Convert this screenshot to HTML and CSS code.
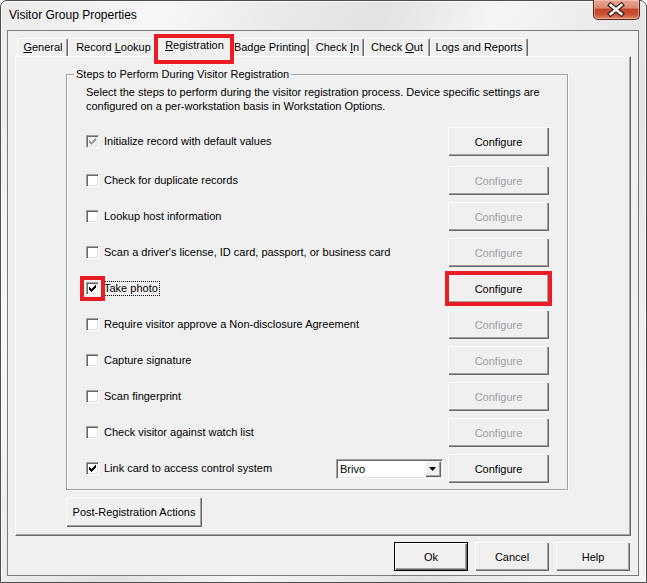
FILE: index.html
```html
<!DOCTYPE html>
<html>
<head>
<meta charset="utf-8">
<title>Visitor Group Properties</title>
<link rel="stylesheet" href="styles.css">
</head>
<body>
<div class="window">
  <div class="titlebar">
    <span class="title">Visitor Group Properties</span>
    <div class="close">
      <svg width="47" height="19" viewBox="0 0 47 19">
        <path d="M18 5 L29 14 M29 5 L18 14" stroke="#3b1a12" stroke-width="5" stroke-linecap="square" fill="none"/>
        <path d="M18 5 L29 14 M29 5 L18 14" stroke="#ffffff" stroke-width="2.6" stroke-linecap="square" fill="none"/>
      </svg>
    </div>
  </div>
  <div class="client">
    <div class="tabs">
      <div class="tab t1"><u>G</u>eneral</div>
      <div class="tab t2">Record <u>L</u>ookup</div>
      <div class="tab t3 sel"><u>R</u>egistration</div>
      <div class="tab t4">Badge Printing</div>
      <div class="tab t5">Check <u>I</u>n</div>
      <div class="tab t6">Check <u>O</u>ut</div>
      <div class="tab t7">Lo<u>g</u>s and Reports</div>
    </div>
    <div class="panel">
      <div class="group">
        <span class="legend">Steps to Perform During Visitor Registration</span>
        <p class="desc">Select the steps to perform during the visitor registration process. Device specific settings are<br>configured on a per-workstation basis in Workstation Options.</p>
        <div class="rows">
          <div class="row first">
            <div class="chk"><span class="box dis"><svg viewBox="0 0 13 13" width="13" height="13"><path d="M3 5V8H4V9H5V10H6V9H7V8H8V7H9V6H10V3H9V4H8V5H7V6H6V7H5V6H4V5Z"/></svg></span><span class="lbl">Initialize record with default values</span></div>
            <button class="btn cfg">Configure</button>
          </div>
          <div class="row">
            <div class="chk"><span class="box"></span><span class="lbl">Check for duplicate records</span></div>
            <button class="btn cfg" disabled>Configure</button>
          </div>
          <div class="row">
            <div class="chk"><span class="box"></span><span class="lbl">Lookup host information</span></div>
            <button class="btn cfg" disabled>Configure</button>
          </div>
          <div class="row">
            <div class="chk"><span class="box"></span><span class="lbl">Scan a driver's license, ID card, passport, or business card</span></div>
            <button class="btn cfg" disabled>Configure</button>
          </div>
          <div class="row">
            <div class="chk"><span class="box mark"><svg viewBox="0 0 13 13" width="13" height="13"><path d="M3 5V8H4V9H5V10H6V9H7V8H8V7H9V6H10V3H9V4H8V5H7V6H6V7H5V6H4V5Z"/></svg></span><span class="lbl focus">Take photo</span></div>
            <button class="btn cfg mark">Configure</button>
          </div>
          <div class="row">
            <div class="chk"><span class="box"></span><span class="lbl">Require visitor approve a Non-disclosure Agreement</span></div>
            <button class="btn cfg" disabled>Configure</button>
          </div>
          <div class="row">
            <div class="chk"><span class="box"></span><span class="lbl">Capture signature</span></div>
            <button class="btn cfg" disabled>Configure</button>
          </div>
          <div class="row">
            <div class="chk"><span class="box"></span><span class="lbl">Scan fingerprint</span></div>
            <button class="btn cfg" disabled>Configure</button>
          </div>
          <div class="row">
            <div class="chk"><span class="box"></span><span class="lbl">Check visitor against watch list</span></div>
            <button class="btn cfg" disabled>Configure</button>
          </div>
          <div class="row">
            <div class="chk"><span class="box"><svg viewBox="0 0 13 13" width="13" height="13"><path d="M3 5V8H4V9H5V10H6V9H7V8H8V7H9V6H10V3H9V4H8V5H7V6H6V7H5V6H4V5Z"/></svg></span><span class="lbl">Link card to access control system</span></div>
            <div class="combo"><span class="combo-text">Brivo</span><span class="combo-btn"><svg width="7" height="4" viewBox="0 0 7 4"><path d="M0 0H7L3.5 4Z" fill="#000"/></svg></span></div>
            <button class="btn cfg">Configure</button>
          </div>
        </div>
      </div>
      <button class="btn post">Post-Registration Actions</button>
    </div>
    <div class="footer">
      <button class="btn foot def">Ok</button>
      <button class="btn foot">Cancel</button>
      <button class="btn foot">Help</button>
    </div>
  </div>
</div>
</body>
</html>
```
FILE: styles.css
```css
html, body {
  margin: 0;
  padding: 0;
  background: #ffffff;
}

body {
  font: 11px "Liberation Sans", Arial, sans-serif;
  color: #000;
}

.window {
  width: 647px;
  height: 583px;
  box-sizing: border-box;
  display: flex;
  flex-direction: column;
  border: 1px solid #4d4d4d;
  border-radius: 7px 7px 0 0;
  background:
    linear-gradient(115deg, rgba(255,255,255,0) 0%, rgba(255,255,255,0.6) 18%, rgba(255,255,255,0) 30%, rgba(210,210,210,0.35) 42%, rgba(255,255,255,0.5) 55%, rgba(210,210,210,0.3) 75%, rgba(255,255,255,0.4) 90%),
    #ebebeb;
  box-shadow: inset 1px 1px 0 #fbfbfb, inset -1px 0 0 #fbfbfb;
}

.titlebar {
  height: 29px;
  flex: none;
  display: flex;
  justify-content: space-between;
  align-items: flex-start;
  padding: 0 6px 0 8px;
}

.title {
  font: 12px "Liberation Sans", Arial, sans-serif;
  line-height: 16px;
  padding-top: 6px;
  color: #000;
}

.close {
  width: 47px;
  height: 20px;
  margin-top: -1px;
  box-sizing: border-box;
  border: 1px solid #5a2016;
  border-top: 0;
  border-radius: 0 0 5px 5px;
  background: linear-gradient(to bottom, #e9a795 0%, #dd8a73 40%, #c2452c 50%, #c9502f 75%, #dd8a6a 100%);
  box-shadow: inset 0 0 0 1px rgba(255,210,195,0.55);
  display: flex;
  align-items: center;
  justify-content: center;
  overflow: hidden;
}

.close svg {
  display: block;
  margin-left: -1px;
}

.client {
  flex: 1;
  margin: 0 7px 6px 6px;
  border: 1px solid #7b7b7b;
  background: #f0f0f0;
  padding: 4px 7px 0 7px;
  display: flex;
  flex-direction: column;
}

/* Tabs */
.tabs {
  height: 21px;
  display: flex;
  align-items: flex-end;
  padding-left: 2px;
  position: relative;
  z-index: 2;
}

.tab {
  height: 18px;
  box-sizing: border-box;
  border-top: 1px solid #ffffff;
  border-left: 1px solid #ffffff;
  border-right: 1px solid #696969;
  box-shadow: inset -1px 0 0 #a0a0a0;
  border-radius: 2px 2px 0 0;
  text-align: center;
  line-height: 17px;
  white-space: nowrap;
  background: #f0f0f0;
}

.tab u { text-decoration: underline; text-underline-offset: 1px; }

.t1 { width: 51px; padding-left: 1px; }
.t2 { width: 88px; padding-left: 3px; }
.t3 { width: 75px; }
.t4 { width: 78px; }
.t5 { width: 55px; padding-left: 2px; }
.t6 { width: 66px; }
.t7 { width: 98px; }

.tab.sel {
  width: 79px;
  height: 22px;
  margin: 0 -2px -1px -2px;
  line-height: 19px;
  padding-left: 2px;
  position: relative;
  z-index: 3;
}

.tab.sel::after {
  content: "";
  position: absolute;
  left: -1px;
  right: -2px;
  top: -2px;
  bottom: -7px;
  border: 4px solid #ec1c24;
}

.panel {
  height: 480px;
  box-sizing: border-box;
  border-top: 1px solid #ffffff;
  border-left: 1px solid #ffffff;
  border-right: 1px solid #696969;
  border-bottom: 1px solid #696969;
  box-shadow: inset -1px -1px 0 #a0a0a0;
  padding: 17px 0 0 50px;
  position: relative;
  z-index: 1;
}

/* Group box */
.group {
  width: 502px;
  box-sizing: border-box;
  border: 1px solid #a0a0a0;
  box-shadow: 1px 1px 0 #ffffff, inset 1px 1px 0 #ffffff;
  padding: 10px 18px 6px 19px;
  position: relative;
}

.legend {
  position: absolute;
  top: -8px;
  left: 7px;
  padding: 0 2px;
  line-height: 14px;
  background: #f0f0f0;
}

.desc {
  margin: 0 0 14px 0;
  line-height: 14px;
}

.rows {
  display: flex;
  flex-direction: column;
  gap: 7px;
}

.row {
  height: 29px;
  display: flex;
  align-items: center;
}

.row.first {
  margin-bottom: 3px;
}

.chk {
  flex: 1;
  display: flex;
  align-items: center;
  min-width: 0;
}

.box {
  width: 13px;
  height: 13px;
  box-sizing: border-box;
  flex: none;
  background: #ffffff;
  border: 1px solid;
  border-color: #a0a0a0 #ffffff #ffffff #a0a0a0;
  box-shadow: inset 1px 1px 0 #696969, inset -1px -1px 0 #e3e3e3;
  margin-right: 3px;
  position: relative;
}

.box svg {
  position: absolute;
  left: -1px;
  top: -1px;
  fill: #000;
}

.box.dis {
  background: #f0f0f0;
}

.box.dis svg {
  fill: #a0a0a0;
}

.box.mark {
  outline: 4px solid #ec1c24;
  outline-offset: 2px;
}

.lbl {
  border: 1px dotted transparent;
  padding: 0 1px;
  line-height: 13px;
  white-space: nowrap;
}

.lbl.focus {
  border-color: #000;
}

/* Buttons */
.btn {
  font: 11px "Liberation Sans", Arial, sans-serif;
  color: #000;
  background: #f0f0f0;
  border: 0;
  padding: 0;
  margin: 0;
  box-sizing: border-box;
  box-shadow: inset 1px 1px 0 #ffffff, inset -1px -1px 0 #696969, inset -2px -2px 0 #a0a0a0;
  text-align: center;
}

.btn:disabled {
  color: #a0a0a0;
}

.cfg {
  width: 101px;
  height: 29px;
  flex: none;
}

.cfg.mark {
  outline: 4px solid #ec1c24;
  outline-offset: -1px;
}

.combo {
  width: 107px;
  height: 20px;
  box-sizing: border-box;
  flex: none;
  margin-right: 5px;
  background: #ffffff;
  border: 1px solid;
  border-color: #a0a0a0 #ffffff #ffffff #a0a0a0;
  box-shadow: inset 1px 1px 0 #696969, inset -1px -1px 0 #e3e3e3;
  display: flex;
  align-items: stretch;
  padding: 1px;
}

.combo-text {
  flex: 1;
  padding-left: 2px;
  line-height: 16px;
}

.combo-btn {
  width: 16px;
  background: #f0f0f0;
  box-shadow: inset 1px 1px 0 #ffffff, inset -1px -1px 0 #696969, inset -2px -2px 0 #a0a0a0;
  display: flex;
  align-items: center;
  justify-content: center;
}

.combo-btn svg {
  display: block;
  margin-left: -1px;
}

.post {
  display: block;
  width: 136px;
  height: 30px;
  margin-top: 7px;
}

.footer {
  display: flex;
  justify-content: flex-end;
  gap: 7px;
  margin-top: 6px;
  padding-right: 1px;
}

.foot {
  width: 74px;
  height: 29px;
}

.foot.def {
  box-shadow: inset 0 0 0 1px #000000, inset 2px 2px 0 #ffffff, inset -2px -2px 0 #696969, inset -3px -3px 0 #a0a0a0;
}
```
